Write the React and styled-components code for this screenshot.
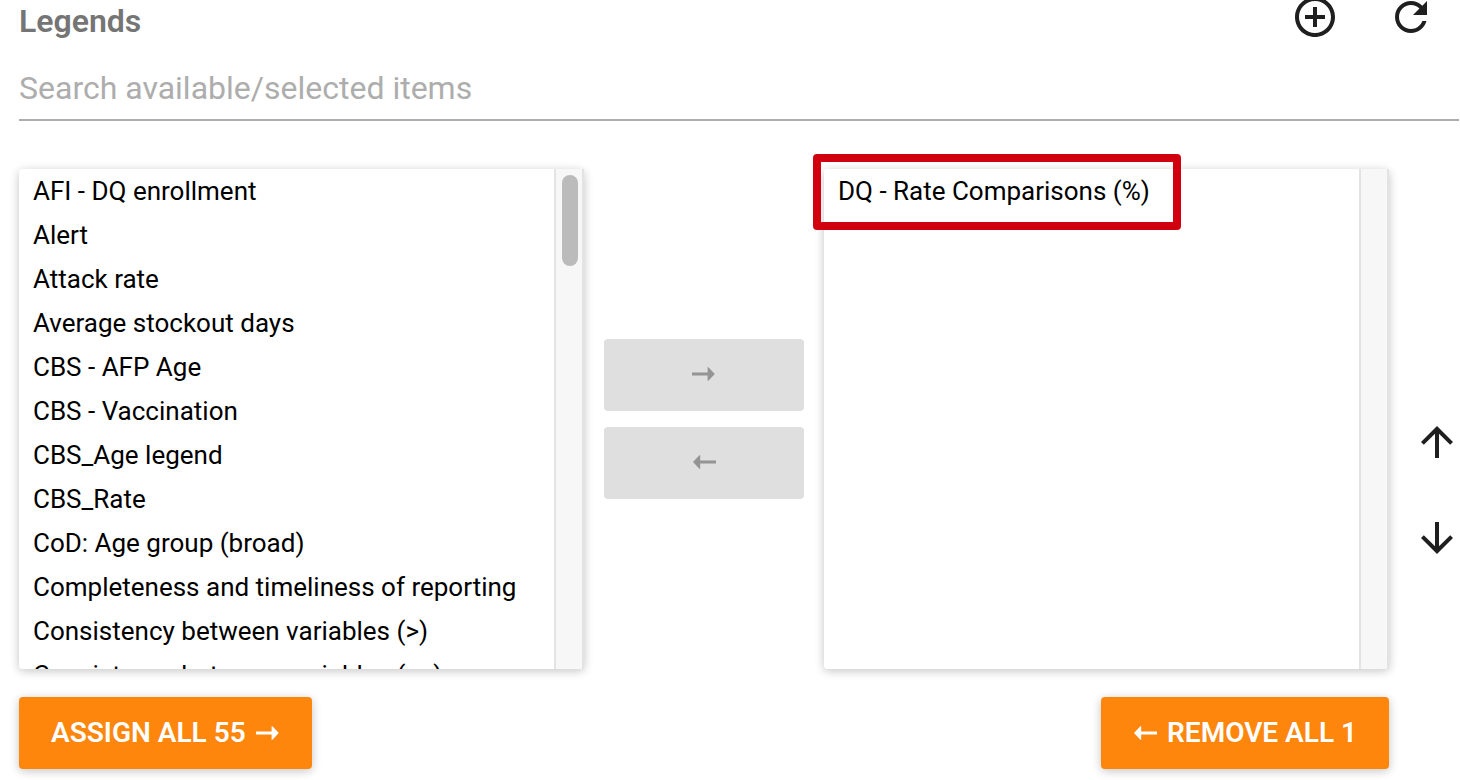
import React from "react";
import styled, { createGlobalStyle } from "styled-components";

const GlobalStyle = createGlobalStyle`
  *, *::before, *::after { box-sizing: border-box; }
  body {
    margin: 0;
    background: #fff;
    font-family: Roboto, "Liberation Sans", sans-serif;
    overflow-x: hidden;
  }
`;

const Page = styled.main`
  padding: 0 1px 11px 19px;
`;

const Header = styled.header`
  display: flex;
  justify-content: space-between;
  align-items: flex-start;
  height: 60px;
`;

const Title = styled.h1`
  margin: 2px 0 0;
  font-size: 32px;
  line-height: 38px;
  font-weight: 600;
  color: #757575;
`;

const HeaderActions = styled.div`
  display: flex;
  gap: 48px;
  padding-right: 24px;
`;

const IconButton = styled.button`
  display: flex;
  align-items: center;
  justify-content: center;
  width: ${(p) => p.$width || 48}px;
  height: ${(p) => p.$height || 34}px;
  padding: 0;
  border: 0;
  background: none;
  color: #1f1f1f;
  cursor: pointer;

  svg { flex: none; fill: currentColor; }
`;

const SearchInput = styled.input`
  display: block;
  width: 100%;
  height: 61px;
  padding: 0 0 4px;
  border: 0;
  border-bottom: 2px solid #adadad;
  outline: 0;
  background: none;
  font: 400 32px/38px Roboto, "Liberation Sans", sans-serif;
  color: #000;

  &::placeholder { color: #adadad; opacity: 1; }
`;

const Body = styled.div`
  display: flex;
  margin-top: 48px;
`;

const Transfer = styled.div`
  flex: 1;
  min-width: 0;
  display: grid;
  grid-template-columns: minmax(0, 1fr) 200px minmax(0, 1fr);
  column-gap: 20px;
  row-gap: 28px;
`;

const Panel = styled.div`
  position: relative;
  display: flex;
  height: 500px;
  border-radius: 4px;
  background: #fff;
  box-shadow: 0 2px 12px rgba(0, 0, 0, 0.12), 0 2px 8px rgba(0, 0, 0, 0.12);
`;

const ListBox = styled.select`
  flex: 1;
  min-width: 0;
  height: 100%;
  padding: 0;
  border: 0;
  outline: 0;
  border-radius: 4px 0 0 4px;
  background: #fff;
  font: 400 26px/30px Roboto, "Liberation Sans", sans-serif;
  color: #000;
  overflow-y: auto;
  scrollbar-width: none;
`;

const Item = styled.option`
  height: 44px;
  padding: 7px 14px;
  line-height: 30px;
`;

const Track = styled.div`
  width: 30px;
  padding: 6px 4px 0 6px;
  border: solid #e3e3e3;
  border-width: 0 2px;
  background: #f7f7f7;
`;

const Thumb = styled.div`
  width: 16px;
  height: 91px;
  border-radius: 8px;
  background: #bbb;
`;

const Highlight = styled.div`
  position: absolute;
  top: -15px;
  left: -11px;
  width: 368px;
  height: 76px;
  border: 8px solid #d1000f;
  border-radius: 4px;
  pointer-events: none;
`;

const MoveButtons = styled.div`
  display: flex;
  flex-direction: column;
  justify-content: center;
  gap: 16px;
`;

const Button = styled.button`
  display: flex;
  align-items: center;
  justify-content: center;
  gap: 10px;
  height: 72px;
  padding: 0 32px;
  border: 0;
  border-radius: 4px;
  font: 600 28px/32px Roboto, "Liberation Sans", sans-serif;
  text-transform: uppercase;
  white-space: nowrap;

  svg { flex: none; fill: currentColor; }
`;

const MoveButton = styled(Button)`
  padding-bottom: 3px;
  background: #dfdfdf;
  color: #949494;
`;

const BulkButton = styled(Button)`
  justify-self: ${(p) => p.$align};
  padding-bottom: 1px;
  background: #ff860d;
  color: #fff;
  box-shadow: 0 2px 12px rgba(0, 0, 0, 0.12), 0 2px 8px rgba(0, 0, 0, 0.12);
  cursor: pointer;
`;

const OrderButtons = styled.div`
  display: flex;
  flex-direction: column;
  gap: 60px;
  width: 70px;
  padding: 255px 4px 0 0;
  align-items: flex-end;
`;

const available = [
  "AFI - DQ enrollment",
  "Alert",
  "Attack rate",
  "Average stockout days",
  "CBS - AFP Age",
  "CBS - Vaccination",
  "CBS_Age legend",
  "CBS_Rate",
  "CoD: Age group (broad)",
  "Completeness and timeliness of reporting",
  "Consistency between variables (>)",
  "Consistency between variables (>=)",
];

const selected = ["DQ - Rate Comparisons (%)"];

function ArrowRight() {
  return (
    <svg width="24" height="14" viewBox="0 0 24 14" aria-hidden="true">
      <path d="M0 5.6h15.6V0.2h0.8L22.8 7l-6.4 6.8h-0.8V8.5H0z" />
    </svg>
  );
}

function ArrowLeft() {
  return (
    <svg width="24" height="14" viewBox="0 0 24 14" aria-hidden="true">
      <path d="M24 5.6H8.2V0.2H7.4L1 7l6.4 6.8h0.8V8.5H24z" />
    </svg>
  );
}

function List({ label, items, children, scrollable }) {
  return (
    <Panel>
      <ListBox multiple aria-label={label}>
        {items.map((item) => (
          <Item key={item}>{item}</Item>
        ))}
      </ListBox>
      <Track>{scrollable && <Thumb />}</Track>
      {children}
    </Panel>
  );
}

export default function App() {
  return (
    <>
      <GlobalStyle />
      <Page>
        <Header>
          <Title>Legends</Title>
          <HeaderActions>
            <IconButton type="button" aria-label="Add legend">
              <svg width="48" height="48" viewBox="0 0 24 24">
                <path d="M13 7h-2v4H7v2h4v4h2v-4h4v-2h-4V7zm-1-5C6.48 2 2 6.48 2 12s4.48 10 10 10 10-4.48 10-10S17.52 2 12 2zm0 18c-4.41 0-8-3.59-8-8s3.59-8 8-8 8 3.59 8 8-3.59 8-8 8z" />
              </svg>
            </IconButton>
            <IconButton type="button" aria-label="Refresh">
              <svg width="48" height="48" viewBox="0 0 24 24">
                <path d="M17.65 6.35C16.2 4.9 14.21 4 12 4c-4.42 0-7.99 3.58-7.99 8s3.57 8 7.99 8c3.73 0 6.84-2.55 7.73-6h-2.08c-.82 2.33-3.04 4-5.65 4-3.31 0-6-2.69-6-6s2.69-6 6-6c1.66 0 3.14.69 4.22 1.78L13 11h7V4l-2.35 2.35z" />
              </svg>
            </IconButton>
          </HeaderActions>
        </Header>

        <SearchInput
          type="text"
          aria-label="Search available/selected items"
          placeholder="Search available/selected items"
        />

        <Body>
          <Transfer>
            <List label="Available legends" items={available} scrollable />
            <MoveButtons>
              <MoveButton type="button" disabled aria-label="Assign selected">
                <ArrowRight />
              </MoveButton>
              <MoveButton type="button" disabled aria-label="Remove selected">
                <ArrowLeft />
              </MoveButton>
            </MoveButtons>
            <List label="Selected legends" items={selected}>
              <Highlight />
            </List>
            <BulkButton type="button" $align="start">
              Assign all 55 <ArrowRight />
            </BulkButton>
            <span />
            <BulkButton type="button" $align="end">
              <ArrowLeft /> Remove all 1
            </BulkButton>
          </Transfer>
          <OrderButtons>
            <IconButton type="button" aria-label="Move up" $width={36} $height={36}>
              <svg width="36" height="36" viewBox="3 3 18 18">
                <path d="M4 12l1.41 1.41L11 7.83V20h2V7.83l5.58 5.59L20 12l-8-8-8 8z" />
              </svg>
            </IconButton>
            <IconButton type="button" aria-label="Move down" $width={36} $height={36}>
              <svg width="36" height="36" viewBox="3 3 18 18">
                <path d="M20 12l-1.41-1.41L13 16.17V4h-2v12.17l-5.58-5.59L4 12l8 8 8-8z" />
              </svg>
            </IconButton>
          </OrderButtons>
        </Body>
      </Page>
    </>
  );
}
